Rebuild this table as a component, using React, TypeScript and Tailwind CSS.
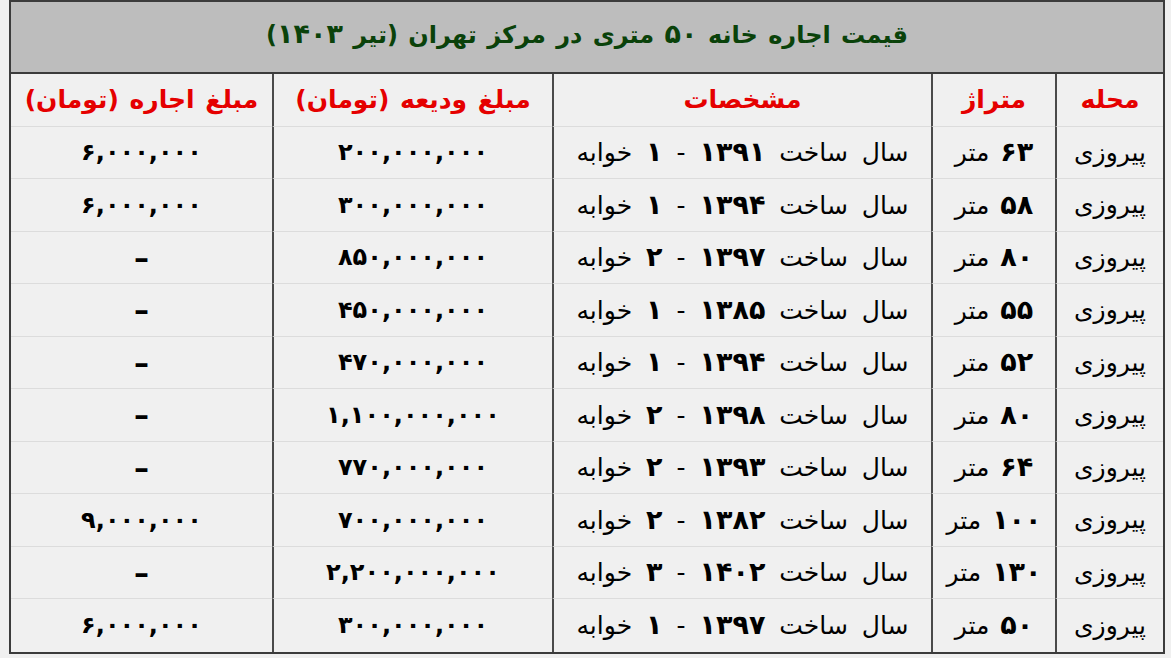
const rows = [
  { area: "پیروزی", size: "۶۳ متر", spec: "سال ساخت ۱۳۹۱ - ۱ خوابه", deposit: "۲۰۰,۰۰۰,۰۰۰", rent: "۶,۰۰۰,۰۰۰" },
  { area: "پیروزی", size: "۵۸ متر", spec: "سال ساخت ۱۳۹۴ - ۱ خوابه", deposit: "۳۰۰,۰۰۰,۰۰۰", rent: "۶,۰۰۰,۰۰۰" },
  { area: "پیروزی", size: "۸۰ متر", spec: "سال ساخت ۱۳۹۷ - ۲ خوابه", deposit: "۸۵۰,۰۰۰,۰۰۰", rent: "–" },
  { area: "پیروزی", size: "۵۵ متر", spec: "سال ساخت ۱۳۸۵ - ۱ خوابه", deposit: "۴۵۰,۰۰۰,۰۰۰", rent: "–" },
  { area: "پیروزی", size: "۵۲ متر", spec: "سال ساخت ۱۳۹۴ - ۱ خوابه", deposit: "۴۷۰,۰۰۰,۰۰۰", rent: "–" },
  { area: "پیروزی", size: "۸۰ متر", spec: "سال ساخت ۱۳۹۸ - ۲ خوابه", deposit: "۱,۱۰۰,۰۰۰,۰۰۰", rent: "–" },
  { area: "پیروزی", size: "۶۴ متر", spec: "سال ساخت ۱۳۹۳ - ۲ خوابه", deposit: "۷۷۰,۰۰۰,۰۰۰", rent: "–" },
  { area: "پیروزی", size: "۱۰۰ متر", spec: "سال ساخت ۱۳۸۲ - ۲ خوابه", deposit: "۷۰۰,۰۰۰,۰۰۰", rent: "۹,۰۰۰,۰۰۰" },
  { area: "پیروزی", size: "۱۳۰ متر", spec: "سال ساخت ۱۴۰۲ - ۳ خوابه", deposit: "۲,۲۰۰,۰۰۰,۰۰۰", rent: "–" },
  { area: "پیروزی", size: "۵۰ متر", spec: "سال ساخت ۱۳۹۷ - ۱ خوابه", deposit: "۳۰۰,۰۰۰,۰۰۰", rent: "۶,۰۰۰,۰۰۰" },
];

const headers = ["محله", "متراژ", "مشخصات", "مبلغ ودیعه (تومان)", "مبلغ اجاره (تومان)"];

const gridCols = "grid grid-cols-[108px_124px_379px_280px_1fr]";

// persian digits in the source render wider than DejaVu's, so bump them up
function Txt({ text, digitClass }: { text: string; digitClass: string }) {
  const parts = text.split(/([۰-۹]+)/);
  return (
    <span>
      {parts.map((p, i) =>
        /[۰-۹]/.test(p) ? (
          <span key={i} className={digitClass}>{p}</span>
        ) : (
          <span key={i}>{p}</span>
        )
      )}
    </span>
  );
}

export default function App() {
  return (
    <div className="min-h-screen bg-[#f0f0f0] pl-[9px] pr-[6px] font-['DejaVu_Sans',sans-serif]">
      <div dir="rtl" className="border-2 border-[#3c3c3c] bg-[#f0f0f0]">
        <div className="h-[72px] pb-[5px] bg-[#bdbdbd] border-b-2 border-[#3c3c3c] flex items-center justify-center">
          <h1 className="text-[24px] font-bold text-[#0a420a] [word-spacing:2px]">
            <Txt text="قیمت اجاره خانه ۵۰ متری در مرکز تهران (تیر ۱۴۰۳)" digitClass="text-[27px] tracking-[1px]" />
          </h1>
        </div>

        <div className={gridCols}>
          {headers.map((h, i) => (
            <div
              key={h}
              className={`h-[52.5px] flex items-center justify-center border-b border-[#dcdcdc] text-[25px] font-bold text-[#e50000] [word-spacing:2px] ${i < 4 ? "border-l-2 border-l-[#4a4a4a]" : ""}`}
            >
              {h}
            </div>
          ))}
        </div>

        {rows.map((r, idx) => {
          const line = idx < 9 ? "border-b border-b-[#dcdcdc]" : "";
          const cell = `h-[52.5px] flex items-center justify-center ${line}`;
          return (
            <div key={idx} className={gridCols}>
              <div className={`${cell} border-l-2 border-l-[#4a4a4a] text-[25px] text-black`}>{r.area}</div>
              <div className={`${cell} border-l-2 border-l-[#4a4a4a] text-[25px] text-black [word-spacing:3px]`}>
                <Txt text={r.size} digitClass="text-[27px] font-bold tracking-[2px]" />
              </div>
              <div className={`${cell} border-l-2 border-l-[#4a4a4a] text-[25px] text-black [word-spacing:6px]`}>
                <Txt text={r.spec} digitClass="text-[27px] font-bold tracking-[2px]" />
              </div>
              <div className={`${cell} border-l-2 border-l-[#4a4a4a] text-[24px] font-bold text-black`}>{r.deposit}</div>
              <div className={`${cell} font-bold text-black ${r.rent === "–" ? "text-[30px]" : "text-[24px]"}`}>{r.rent}</div>
            </div>
          );
        })}
      </div>
    </div>
  );
}
